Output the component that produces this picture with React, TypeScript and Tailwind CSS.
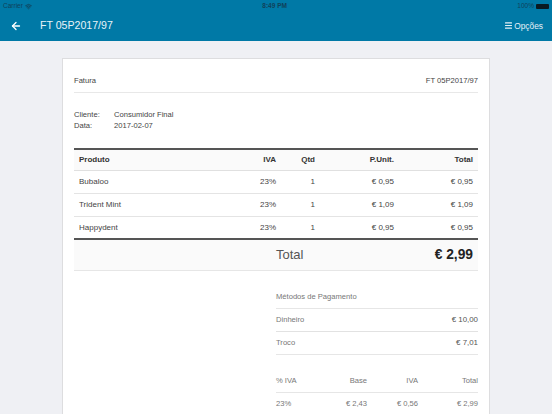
import { ArrowLeft, Menu, Wifi } from "lucide-react";

const rows = [
  { name: "Bubaloo", iva: "23%", qty: "1", unit: "€ 0,95", total: "€ 0,95", border: "border-b border-[#e4e4e4]" },
  { name: "Trident Mint", iva: "23%", qty: "1", unit: "€ 1,09", total: "€ 1,09", border: "border-b border-[#e4e4e4]" },
  { name: "Happydent", iva: "23%", qty: "1", unit: "€ 0,95", total: "€ 0,95", border: "border-b-2 border-[#555555]" },
];

const grid = "grid grid-cols-[158px_39px_39px_79px_1fr] px-[5px] items-center";

export default function App() {
  return (
    <div className="w-[552px] h-[414px] overflow-hidden bg-[#eff0f4] font-['Liberation_Sans',Arial,sans-serif] text-[7.6px] text-[#555555]">
      <header className="h-[41px] bg-[#0079a6] text-white flex flex-col">
        <div className="h-[12px] px-[3px] flex items-center justify-between text-[6.5px] text-[#10425a]">
          <div className="flex items-center gap-[2px]">
            <span>Carrier</span>
            <Wifi size={7} strokeWidth={3} />
          </div>
          <span className="font-bold">8:49 PM</span>
          <div className="flex items-center gap-[2px]">
            <span>100%</span>
            <div className="w-[13px] h-[5px] bg-[#0a1a22] rounded-[1px]" />
          </div>
        </div>
        <div className="flex-1 flex items-center justify-between pl-[10px] pr-[9px] pb-[1px]">
          <div className="flex items-center">
            <ArrowLeft size={12} strokeWidth={2.6} />
            <span className="ml-[18px] text-[10.6px] text-[#e8f3f8]">FT 05P2017/97</span>
          </div>
          <div className="flex items-center gap-[1px] text-[8.4px] text-[#e3f0f6]">
            <Menu size={9} strokeWidth={3} />
            <span>Opções</span>
          </div>
        </div>
      </header>

      <main className="mt-[17px] ml-[62px] w-[428px] h-[400px] bg-white border border-[#dddddf] px-[11px] text-[#444444]">
        <div className="h-[34px] pt-[10px] border-b border-[#e8e8e8] flex items-center justify-between">
          <span>Fatura</span>
          <span>FT 05P2017/97</span>
        </div>

        <div className="mt-[16px] grid grid-cols-[40px_1fr] leading-[11px]">
          <span>Cliente:</span>
          <span>Consumidor Final</span>
          <span>Data:</span>
          <span>2017-02-07</span>
        </div>

        <div className="mt-[17px] text-[8px]">
          <div className={`${grid} h-[23px] border-t-2 border-[#555555] border-b border-b-[#e0e0e0] bg-[#fafafa] font-bold text-[#333333]`}>
            <span>Produto</span>
            <span className="text-right">IVA</span>
            <span className="text-right">Qtd</span>
            <span className="text-right">P.Unit.</span>
            <span className="text-right">Total</span>
          </div>
          {rows.map((r) => (
            <div key={r.name} className={`${grid} h-[23px] ${r.border}`}>
              <span>{r.name}</span>
              <span className="text-right">{r.iva}</span>
              <span className="text-right">{r.qty}</span>
              <span className="text-right">{r.unit}</span>
              <span className="text-right">{r.total}</span>
            </div>
          ))}
          <div className="h-[31px] bg-[#fafafa] border-b border-[#e6e6e6] pl-[202px] pr-[5px] flex items-center justify-between">
            <span className="text-[13px] text-[#555555]">Total</span>
            <span className="text-[13.8px] font-bold text-[#222222]">€ 2,99</span>
          </div>
        </div>

        <div className="ml-[202px] mt-[15px] text-[#777777]">
          <div className="h-[23px] border-b border-[#e6e6e6] flex items-center">Métodos de Pagamento</div>
          <div className="h-[23px] border-b border-[#e2e2e2] flex items-center justify-between">
            <span>Dinheiro</span>
            <span className="text-[#555555] text-[7.9px]">€ 10,00</span>
          </div>
          <div className="h-[23px] border-b border-[#e6e6e6] flex items-center justify-between">
            <span>Troco</span>
            <span className="text-[#555555] text-[7.9px]">€ 7,01</span>
          </div>

          <div className="mt-[15px] grid grid-cols-[40px_51px_51px_1fr] h-[23px] border-b border-[#e6e6e6] items-center text-right">
            <span className="text-left whitespace-nowrap">% IVA</span>
            <span>Base</span>
            <span>IVA</span>
            <span>Total</span>
          </div>
          <div className="grid grid-cols-[40px_51px_51px_1fr] h-[22px] items-center text-right">
            <span className="text-left">23%</span>
            <span>€ 2,43</span>
            <span>€ 0,56</span>
            <span>€ 2,99</span>
          </div>
        </div>
      </main>
    </div>
  );
}
